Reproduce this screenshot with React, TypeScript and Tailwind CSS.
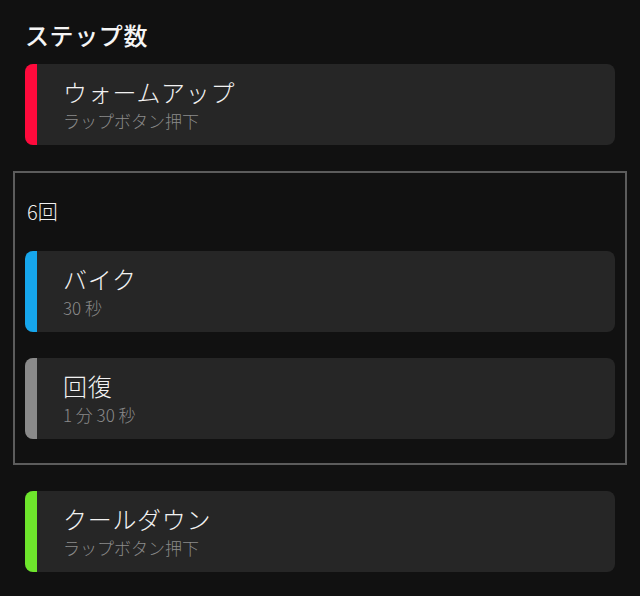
const FONT = { fontFamily: '"Noto Sans CJK JP", "Noto Sans", sans-serif' }

type Step = { title: string; sub: string; stripe: string }

function StepCard({ step }: { step: Step }) {
  return (
    <div className="flex h-[81px] overflow-hidden rounded-[8px] bg-[#262626]">
      <div className={`w-[12px] shrink-0 ${step.stripe}`} />
      <div className="flex flex-col pl-[26px] pt-[13px]">
        <div className="text-[24px] leading-[30px] font-light tracking-[0.7px] text-[#f2f2f2]">{step.title}</div>
        <div className="mt-[4px] text-[17px] leading-[20px] font-light text-[#8a8a8a]">{step.sub}</div>
      </div>
    </div>
  )
}

export default function App() {
  return (
    <div className="min-h-[596px] w-[640px] bg-[#111111] px-[13px] pt-[19px] pb-[24px]" style={FONT}>
      {/* タイトル */}
      <h1 className="pl-[12px] text-[24px] leading-[32px] font-medium tracking-[0.6px] text-[#f5f5f5]">ステップ数</h1>

      <div className="mx-[12px] mt-[13px]">
        <StepCard step={{ title: 'ウォームアップ', sub: 'ラップボタン押下', stripe: 'bg-[#ff0a3c]' }} />
      </div>

      {/* 繰り返しブロック */}
      <div className="mt-[26px] border-2 border-[#5c5c5c] px-[10px] pt-[25px] pb-[24px]">
        <div className="pl-[2px] text-[20px] leading-[28px] font-light text-[#f0f0f0]">6回</div>
        <div className="mt-[25px] flex flex-col gap-[26px]">
          <StepCard step={{ title: 'バイク', sub: '30 秒', stripe: 'bg-[#16a6ec]' }} />
          <StepCard step={{ title: '回復', sub: '1 分 30 秒', stripe: 'bg-[#8a8a8a]' }} />
        </div>
      </div>

      <div className="mx-[12px] mt-[26px]">
        <StepCard step={{ title: 'クールダウン', sub: 'ラップボタン押下', stripe: 'bg-[#6ee62c]' }} />
      </div>
    </div>
  )
}
